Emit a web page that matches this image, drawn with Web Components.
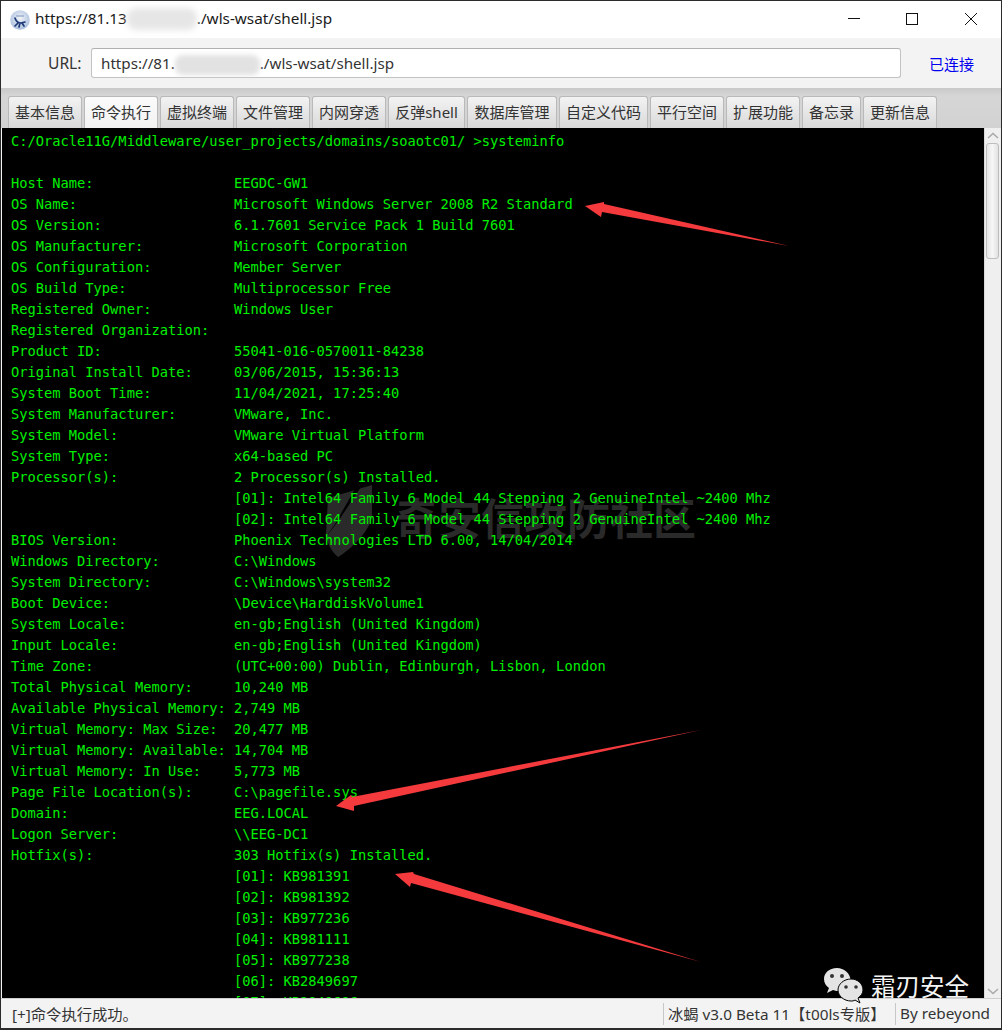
<!DOCTYPE html>
<html>
<head>
<meta charset="utf-8">
<title>shell.jsp</title>
<style>
  html, body { margin: 0; padding: 0; background: #fff; }
  body { font-family: "Noto Sans", "Noto Sans CJK SC", sans-serif; overflow: hidden; }
</style>
</head>
<body>
<app-window>
  <title-bar slot="title"></title-bar>
  <url-bar slot="url"></url-bar>
  <tab-strip slot="tabs">
    <tab-item>基本信息</tab-item>
    <tab-item active>命令执行</tab-item>
    <tab-item>虚拟终端</tab-item>
    <tab-item>文件管理</tab-item>
    <tab-item>内网穿透</tab-item>
    <tab-item style="width:77px">反弹shell</tab-item>
    <tab-item style="width:90px">数据库管理</tab-item>
    <tab-item style="width:89px">自定义代码</tab-item>
    <tab-item>平行空间</tab-item>
    <tab-item>扩展功能</tab-item>
    <tab-item style="width:59px">备忘录</tab-item>
    <tab-item>更新信息</tab-item>
  </tab-strip>
  <term-pane slot="term">C:/Oracle11G/Middleware/user_projects/domains/soaotc01/ &gt;systeminfo

Host Name:                 EEGDC-GW1
OS Name:                   Microsoft Windows Server 2008 R2 Standard
OS Version:                6.1.7601 Service Pack 1 Build 7601
OS Manufacturer:           Microsoft Corporation
OS Configuration:          Member Server
OS Build Type:             Multiprocessor Free
Registered Owner:          Windows User
Registered Organization:
Product ID:                55041-016-0570011-84238
Original Install Date:     03/06/2015, 15:36:13
System Boot Time:          11/04/2021, 17:25:40
System Manufacturer:       VMware, Inc.
System Model:              VMware Virtual Platform
System Type:               x64-based PC
Processor(s):              2 Processor(s) Installed.
                           [01]: Intel64 Family 6 Model 44 Stepping 2 GenuineIntel ~2400 Mhz
                           [02]: Intel64 Family 6 Model 44 Stepping 2 GenuineIntel ~2400 Mhz
BIOS Version:              Phoenix Technologies LTD 6.00, 14/04/2014
Windows Directory:         C:\Windows
System Directory:          C:\Windows\system32
Boot Device:               \Device\HarddiskVolume1
System Locale:             en-gb;English (United Kingdom)
Input Locale:              en-gb;English (United Kingdom)
Time Zone:                 (UTC+00:00) Dublin, Edinburgh, Lisbon, London
Total Physical Memory:     10,240 MB
Available Physical Memory: 2,749 MB
Virtual Memory: Max Size:  20,477 MB
Virtual Memory: Available: 14,704 MB
Virtual Memory: In Use:    5,773 MB
Page File Location(s):     C:\pagefile.sys
Domain:                    EEG.LOCAL
Logon Server:              \\EEG-DC1
Hotfix(s):                 303 Hotfix(s) Installed.
                           [01]: KB981391
                           [02]: KB981392
                           [03]: KB977236
                           [04]: KB981111
                           [05]: KB977238
                           [06]: KB2849697
                           [07]: KB2849696</term-pane>
  <status-bar slot="status"></status-bar>
  <brand-mark slot="overlay"></brand-mark>
</app-window>

<script>
// top level frame, sections stacked by flow
class AppWindow extends HTMLElement {
  constructor() {
    super();
    this.attachShadow({ mode: "open" }).innerHTML = `
<style>
  :host {
    display: flex;
    flex-direction: column;
    position: relative;
    width: 1002px;
    height: 1030px;
    box-sizing: border-box;
    border: 1px solid #2b2b2b;
    border-bottom-width: 2px;
    background: #f2f2f2;
    overflow: hidden;
  }
</style>
<slot name="title"></slot>
<slot name="url"></slot>
<slot name="tabs"></slot>
<slot name="term"></slot>
<slot name="status"></slot>
<slot name="overlay"></slot>`;
  }
}
customElements.define('app-window', AppWindow);

class TitleBar extends HTMLElement {
  constructor() {
    super();
    this.attachShadow({ mode: "open" }).innerHTML = `
<style>
  :host {
    display: flex;
    align-items: center;
    height: 37px;
    flex: none;
    background: #fff;
    color: #1a1a1a;
    font-size: 15.3px;
    padding-left: 9px;
  }
  .logo { width: 20px; height: 20px; flex: none; margin-right: 5px; }
  .txt { white-space: pre; margin-top: -1px; }
  .blur {
    display: inline-block;
    width: 70px;
    height: 22px;
    vertical-align: middle;
    background: #e6e6e6;
    border-radius: 9px;
    filter: blur(3px);
  }
  .ctrls { margin-left: auto; display: flex; height: 100%; }
  .ctrls svg { height: 37px; display: block; }
</style>
<svg class="logo" viewBox="0 0 20 20">
  <defs><radialGradient id="g" cx="50%" cy="40%" r="60%"><stop offset="0" stop-color="#f0f3f8"/><stop offset="1" stop-color="#a9bedd"/></radialGradient></defs>
  <circle cx="10" cy="10" r="9.8" fill="url(#g)"/>
  <path d="M5 8 C6 11 8 13 11 13 L15 12 M8 13 L5 16 M10 13 L9 17 M12 13 L14 16" fill="none" stroke="#1d3a78" stroke-width="1.7" stroke-linecap="round"/>
  <path d="M6 6 H14" stroke="#7f95b8" stroke-width="1"/>
</svg>
<span class="txt">https://81.13<span class="blur"></span>./wls-wsat/shell.jsp</span>
<div class="ctrls">
  <svg width="58" viewBox="0 0 58 37"><path d="M9 17.5 H21" stroke="#111" stroke-width="1" fill="none"/></svg>
  <svg width="58" viewBox="0 0 58 37"><rect x="9.5" y="12.5" width="11" height="11" stroke="#111" stroke-width="1" fill="none"/></svg>
  <svg width="46" viewBox="0 0 46 37"><path d="M10 12 L22 24 M22 12 L10 24" stroke="#111" stroke-width="1" fill="none"/></svg>
</div>`;
  }
}
customElements.define('title-bar', TitleBar);

class UrlBar extends HTMLElement {
  constructor() {
    super();
    this.attachShadow({ mode: "open" }).innerHTML = `
<style>
  :host {
    display: flex;
    align-items: center;
    height: 50px;
    flex: none;
    box-sizing: border-box;
    background: #f3f3f3;
    font-size: 15px;
    color: #333;
    padding-left: 47px;
  }
  label { width: 43px; flex: none; font-size: 15.6px; }
  .input {
    width: 810px;
    height: 30px;
    flex: none;
    box-sizing: border-box;
    background: #fff;
    border: 1px solid #c2c2c2;
    border-top-color: #b0b0b0;
    border-radius: 3px;
    padding-left: 9px;
    line-height: 29px;
    white-space: pre;
    color: #333;
    font-size: 15.2px;
  }
  .blur {
    display: inline-block;
    width: 85px;
    height: 20px;
    vertical-align: middle;
    background: #e2e2e2;
    border-radius: 8px;
    filter: blur(2.5px);
  }
  .state { margin-left: 28px; color: #0000ee; }
</style>
<label>URL:</label>
<div class="input">https://81.<span class="blur"></span>./wls-wsat/shell.jsp</div>
<span class="state">已连接</span>`;
  }
}
customElements.define('url-bar', UrlBar);

class TabStrip extends HTMLElement {
  constructor() {
    super();
    this.attachShadow({ mode: "open" }).innerHTML = `
<style>
  :host {
    display: flex;
    align-items: flex-end;
    gap: 2px;
    height: 40px;
    flex: none;
    box-sizing: border-box;
    padding-left: 7px;
    background: linear-gradient(#c9c9c9, #d6d6d6 20%, #d2d2d2);
  }
</style>
<slot></slot>`;
  }
}
customElements.define('tab-strip', TabStrip);

class TabItem extends HTMLElement {
  constructor() {
    super();
    this.attachShadow({ mode: "open" }).innerHTML = `
<style>
  :host {
    display: flex;
    align-items: center;
    justify-content: center;
    width: 74px;
    height: 32px;
    box-sizing: border-box;
    border: 1px solid #b9b9b9;
    border-bottom: none;
    border-radius: 3px 3px 0 0;
    padding-bottom: 2px;
    background: linear-gradient(#f3f3f3, #d9d9d9);
    color: #333;
    font-size: 15px;
    white-space: nowrap;
  }
  :host([active]) { background: linear-gradient(#fbfbfb, #f2f2f2); }
</style>
<slot></slot>`;
  }
}
customElements.define('tab-item', TabItem);

class TermPane extends HTMLElement {
  constructor() {
    super();
    this.attachShadow({ mode: "open" }).innerHTML = `
<style>
  :host {
    display: flex;
    flex: none;
    height: 870px;
    position: relative;
    background: #000;
    overflow: hidden;
    margin-left: 1px;
  }
  .text {
    flex: 1;
    min-width: 0;
    margin: 0;
    padding: 3px 0 0 9px;
    font: 13.72px/21px "DejaVu Sans Mono", monospace;
    color: #00f000;
    white-space: pre;
    overflow: hidden;
    position: relative;
  }
  .mark {
    position: absolute;
    left: 393px;
    top: 362px;
    font: bold 43px/52px "Noto Sans CJK SC", sans-serif;
    color: #2a2a2a;
    white-space: nowrap;
  }
  .shield { position: absolute; left: 0; top: 0; }
  .arrows { position: absolute; left: 0; top: 0; }
  .bar {
    width: 17px;
    flex: none;
    display: flex;
    flex-direction: column;
    background: #efefef;
    box-sizing: border-box;
    border-left: 1px solid #dadada;
  }
  .btn { height: 15px; flex: none; display: block; }
  .thumb {
    height: 116px;
    flex: none;
    box-sizing: border-box;
    margin: 0 2px 0 1px;
    border: 1px solid #bdbdbd;
    border-radius: 3px;
    background: linear-gradient(90deg, #e6e6e6, #f6f6f6 50%, #e2e2e2);
  }
  .track { flex: 1; }
</style>
<svg class="shield" width="500" height="500" viewBox="0 0 500 500">
  <g transform="translate(-1,-128)">
    <path d="M327 498 L371 485 L371 518 C366 534 350 549 337 557 C331 552 326 544 325 534 Z" fill="#2a2a2a"/>
    <path d="M358 482 L334 524 L322 541 L338 520 L362 484 Z" fill="#000"/>
  </g>
</svg>
<div class="mark">奇安信攻防社区</div>
<pre class="text"><slot></slot></pre>
<svg class="arrows" width="983" height="870" viewBox="0 0 983 870">
  <g transform="translate(-1,-128)" fill="#f43a3d">
    <path d="M584 206 L603 202 L603 204 L788 246 L601 212 L600 217 Z"/>
    <path d="M335 806 L350 795 L351 797 L700 730 L353 806 L353 811 Z"/>
    <path d="M394 874 L412 872 L413 874 L700 962 L410 883 L409 887 Z"/>
  </g>
</svg>
<div class="bar">
  <svg class="btn" viewBox="0 0 16 15"><path d="M3 10 L8 5.5 L13 10" fill="none" stroke="#a8a8a8" stroke-width="1.4"/></svg>
  <div class="thumb"></div>
  <div class="track"></div>
  <svg class="btn" viewBox="0 0 16 15"><path d="M3 6 L8 10.5 L13 6" fill="none" stroke="#a8a8a8" stroke-width="1.4"/></svg>
</div>`;
  }
}
customElements.define('term-pane', TermPane);

class StatusBar extends HTMLElement {
  constructor() {
    super();
    this.attachShadow({ mode: "open" }).innerHTML = `
<style>
  :host {
    display: flex;
    flex: 1;
    align-items: center;
    box-sizing: border-box;
    border-top: 1px solid #cfcfcf;
    background: #f3f3f3;
    color: #333;
    font-size: 15.3px;
    white-space: nowrap;
    padding-left: 11px;
  }
  .cell { display: flex; align-items: center; height: 22px; box-sizing: border-box; padding-bottom: 2px; }
  .msg { width: 651px; flex: none; }
  .ver { width: 232px; flex: none; border-left: 1px solid #c8c8c8; padding-left: 4px; }
  .by { border-left: 1px solid #c8c8c8; padding-left: 4px; }
</style>
<div class="cell msg">[+]命令执行成功。</div>
<div class="cell ver">冰蝎 v3.0 Beta 11【t00ls专版】</div>
<div class="cell by">By rebeyond</div>`;
  }
}
customElements.define('status-bar', StatusBar);

// wechat stamp pasted on top of the screenshot corner
class BrandMark extends HTMLElement {
  constructor() {
    super();
    this.attachShadow({ mode: "open" }).innerHTML = `
<style>
  :host {
    position: absolute;
    left: 822px;
    top: 966px;
    display: flex;
    align-items: center;
    gap: 7px;
    color: #f4f4f4;
    font: 24.5px/36px "Noto Sans CJK SC", sans-serif;
    white-space: nowrap;
  }
  svg { width: 41px; height: 37px; display: block; }
</style>
<svg viewBox="0 0 41 37">
  <path d="M14 1 C6 1 1 6 1 12 C1 16 3 19 6 21 L4 26 L10 23 C12 24 15 24 17 24 L28 14 C27 6 21 1 14 1 Z" fill="#e4e4e4"/>
  <circle cx="9" cy="9" r="2" fill="#333"/><circle cx="19" cy="9" r="2" fill="#333"/>
  <path d="M28 12 C21 12 15 17 15 23 C15 29 21 34 28 34 C29 34 31 34 32 33 L37 36 L35 31 C38 29 40 26 40 23 C40 17 35 12 28 12 Z" fill="#e4e4e4" stroke="#000" stroke-width="1"/>
  <circle cx="23" cy="20" r="1.8" fill="#333"/><circle cx="33" cy="20" r="1.8" fill="#333"/>
</svg>
<span>霜刃安全</span>`;
  }
}
customElements.define('brand-mark', BrandMark);
</script>
</body>
</html>
